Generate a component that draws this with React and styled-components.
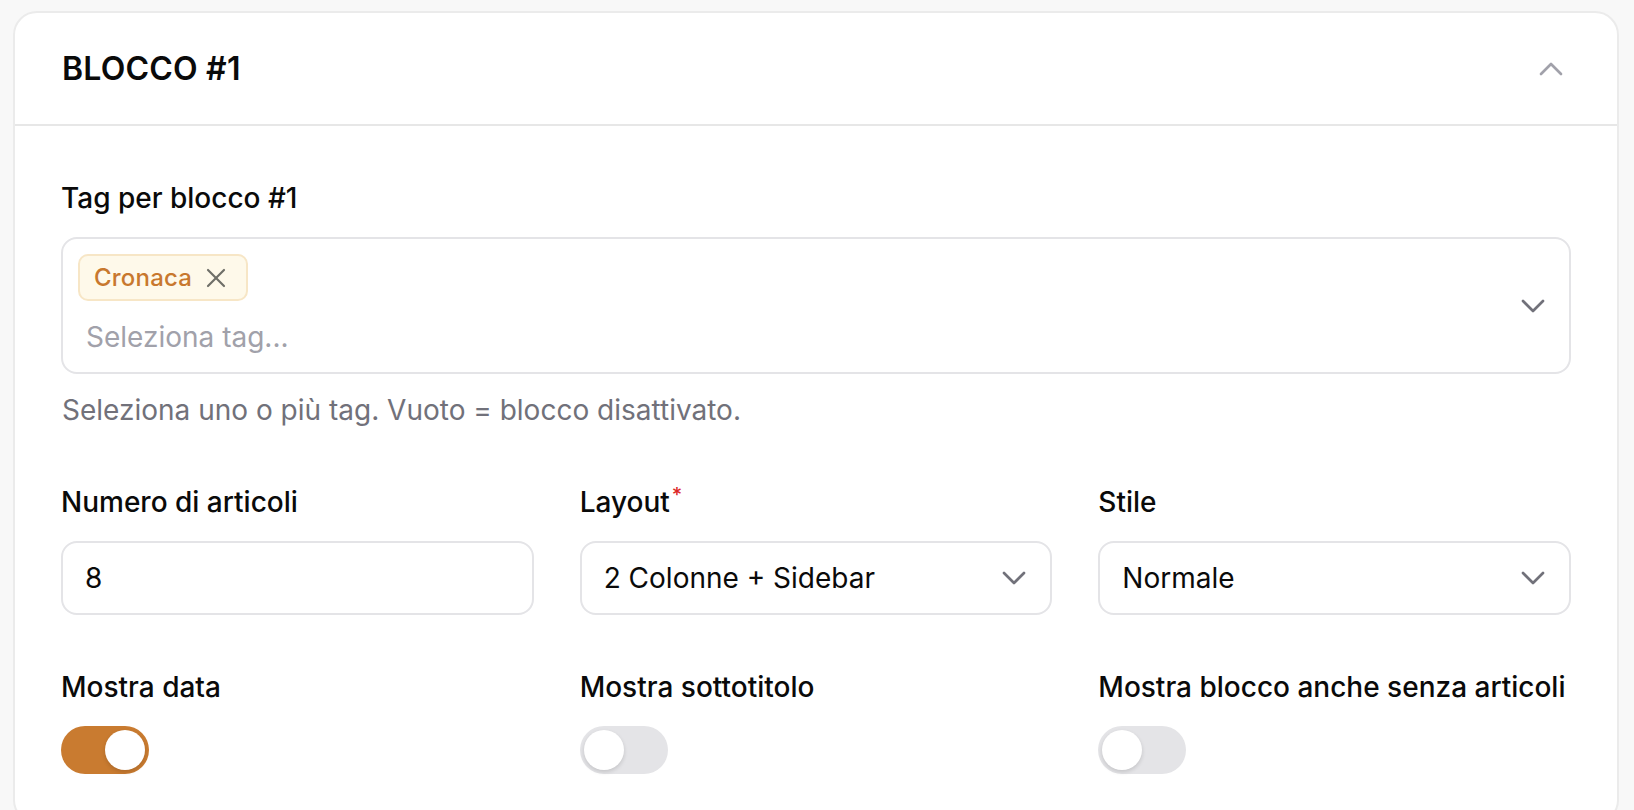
import React from 'react'
import styled, { createGlobalStyle } from 'styled-components'
import { ChevronDown, ChevronUp, X } from 'lucide-react'

const GlobalStyle = createGlobalStyle`
    html, body {
        margin: 0;
        overflow: hidden;
        background: #f8f8f8;
    }
    body {
        font-family: Inter, "Noto Sans", sans-serif;
        color: #0a0a0a;
        -webkit-font-smoothing: antialiased;
    }
    * { box-sizing: border-box; }
`

const Page = styled.div`
    padding: 11px 15px 0 13px;
`

const Card = styled.section`
    background: #fff;
    border: 2px solid #ebebeb;
    border-radius: 24px;
`

const CardHeader = styled.header`
    display: flex;
    align-items: center;
    justify-content: space-between;
    height: 113px;
    padding: 0 46px 0 47px;
    border-bottom: 2px solid #e7e7e7;
`

const Title = styled.h2`
    margin: 0;
    font-size: 32px;
    line-height: 48px;
    font-weight: 600;
    letter-spacing: 0.2px;
`

const IconButton = styled.button`
    display: flex;
    align-items: center;
    justify-content: center;
    width: 40px;
    height: 40px;
    padding: 0;
    border: 0;
    background: none;
    color: ${p => p.$tone || '#a1a1aa'};
    flex-shrink: 0;
`

const CardBody = styled.div`
    display: flex;
    flex-direction: column;
    gap: 52px;
    padding: 52px 46px 48px;
`

const Field = styled.div`
    display: flex;
    flex-direction: column;
    min-width: 0;
`

const Label = styled.label`
    font-size: 28px;
    line-height: 40px;
    font-weight: 450;
    margin-bottom: 19px;
    white-space: nowrap;
`

const Required = styled.span`
    color: #dc2626;
    font-size: 20px;
    vertical-align: super;
    line-height: 0;
    margin-left: 2px;
`

const TagBox = styled.div`
    display: flex;
    align-items: center;
    min-height: 137px;
    padding: 15px 16px 15px 15px;
    border: 2px solid #e4e4e7;
    border-radius: 16px;
`

const TagArea = styled.div`
    flex: 1;
    display: flex;
    flex-direction: column;
    gap: 16px;
`

const ChipRow = styled.div`
    display: flex;
    flex-wrap: wrap;
    gap: 8px;
`

const Chip = styled.span`
    display: inline-flex;
    align-items: center;
    gap: 8px;
    height: 47px;
    padding: 0 14px 0 14px;
    background: #fef9ea;
    border: 2px solid #f7e6c6;
    border-radius: 10px;
    color: #c8782e;
    font-size: 24px;
    font-weight: 450;
    letter-spacing: 0.2px;
`

const ChipRemove = styled.span`
    display: flex;
    color: #6f6f68;
`

const Placeholder = styled.span`
    font-size: 28px;
    line-height: 40px;
    padding-left: 8px;
    color: #a1a1aa;
`

const Hint = styled.p`
    margin: 16px 0 0;
    padding-left: 1px;
    font-size: 28px;
    line-height: 40px;
    color: #71717a;
`

const Grid = styled.div`
    display: grid;
    grid-template-columns: repeat(3, 1fr);
    column-gap: 46px;
`

const Control = styled.div`
    display: flex;
    align-items: center;
    justify-content: space-between;
    height: 74px;
    padding: 0 16px 0 22px;
    border: 2px solid #e4e4e7;
    border-radius: 16px;
    font-size: 28px;
    color: #0a0a0a;
`

const NumberInput = styled.input`
    height: 74px;
    padding: 0 22px;
    border: 2px solid #e4e4e7;
    border-radius: 16px;
    font-family: inherit;
    font-size: 28px;
    color: #0a0a0a;
    outline: none;
    width: 100%;
`

const Switch = styled.button`
    display: flex;
    justify-content: ${p => (p.$on ? 'flex-end' : 'flex-start')};
    align-items: center;
    width: 88px;
    height: 48px;
    padding: 4px;
    border: 0;
    border-radius: 24px;
    background: ${p => (p.$on ? '#c97b30' : '#e4e4e7')};
`

const Knob = styled.span`
    width: 40px;
    height: 40px;
    border-radius: 50%;
    background: #fff;
    box-shadow: 0 2px 4px rgba(0, 0, 0, 0.14);
`

function Select({ value }) {
    return (
        <Control>
            <span>{value}</span>
            <IconButton as="span" $tone="#71717a">
                <ChevronDown size={40} strokeWidth={1.6} />
            </IconButton>
        </Control>
    )
}

function Toggle({ label, on }) {
    return (
        <Field>
            <Label>{label}</Label>
            <Switch $on={on} role="switch" aria-checked={on}>
                <Knob />
            </Switch>
        </Field>
    )
}

export default function App() {
    return (
        <Page>
            <GlobalStyle />
            <Card>
                <CardHeader>
                    <Title>BLOCCO #1</Title>
                    <IconButton>
                        <ChevronUp size={40} strokeWidth={1.6} />
                    </IconButton>
                </CardHeader>
                <CardBody>
                    <Field>
                        <Label>Tag per blocco #1</Label>
                        <TagBox>
                            <TagArea>
                                <ChipRow>
                                    <Chip>
                                        Cronaca
                                        <ChipRemove>
                                            <X size={32} strokeWidth={1.6} />
                                        </ChipRemove>
                                    </Chip>
                                </ChipRow>
                                <Placeholder>Seleziona tag...</Placeholder>
                            </TagArea>
                            <IconButton as="span" $tone="#71717a">
                                <ChevronDown size={40} strokeWidth={1.6} />
                            </IconButton>
                        </TagBox>
                        <Hint>Seleziona uno o più tag. Vuoto = blocco disattivato.</Hint>
                    </Field>
                    <Grid>
                        <Field>
                            <Label>Numero di articoli</Label>
                            <NumberInput type="text" inputMode="numeric" defaultValue="8" />
                        </Field>
                        <Field>
                            <Label>Layout<Required>*</Required></Label>
                            <Select value="2 Colonne + Sidebar" />
                        </Field>
                        <Field>
                            <Label>Stile</Label>
                            <Select value="Normale" />
                        </Field>
                    </Grid>
                    <Grid>
                        <Toggle label="Mostra data" on />
                        <Toggle label="Mostra sottotitolo" />
                        <Toggle label="Mostra blocco anche senza articoli" />
                    </Grid>
                </CardBody>
            </Card>
        </Page>
    )
}
